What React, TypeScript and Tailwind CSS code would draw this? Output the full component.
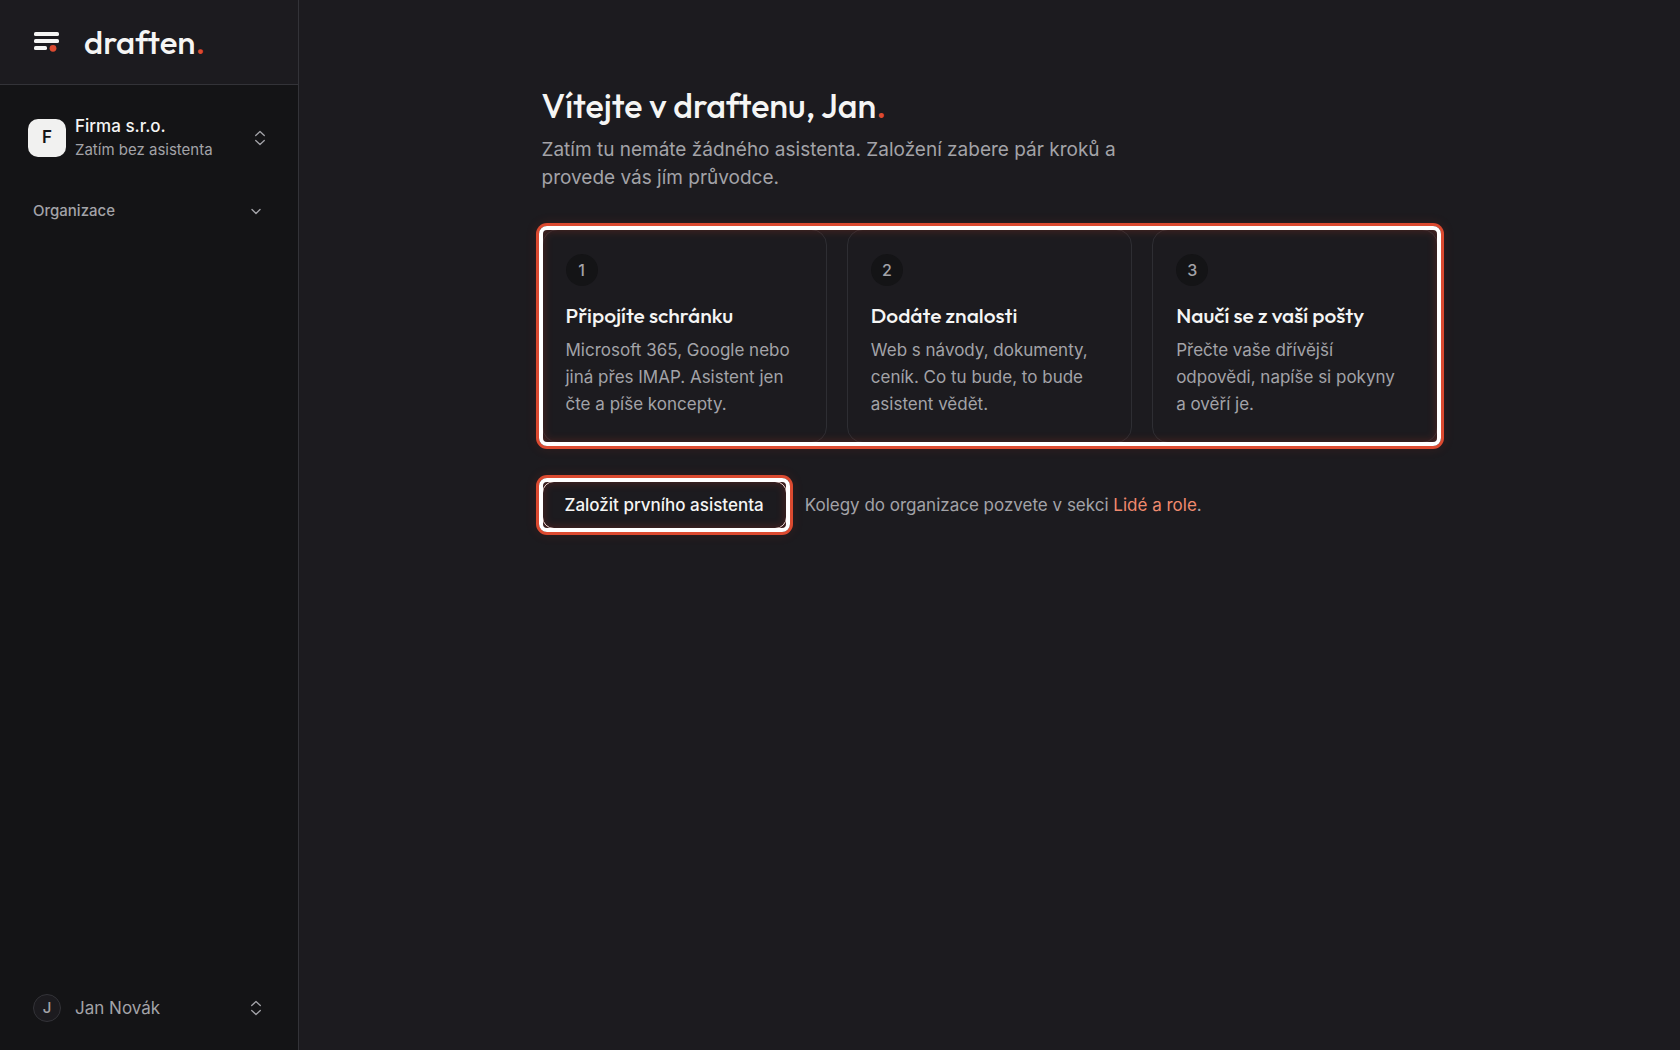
import React from "react";

const steps = [
  { title: "Připojíte schránku", text: "Microsoft 365, Google nebo jiná přes IMAP. Asistent jen čte a píše koncepty." },
  { title: "Dodáte znalosti", text: "Web s návody, dokumenty, ceník. Co tu bude, to bude asistent vědět." },
  { title: "Naučí se z vaší pošty", text: "Přečte vaše dřívější odpovědi, napíše si pokyny a\u00a0ověří je." },
];

function UpDown() {
  return (
    <svg className="h-4 w-4 shrink-0 text-[#a3a3a8]" viewBox="0 0 16 16" fill="none" stroke="currentColor" strokeWidth="1.3" strokeLinecap="round" strokeLinejoin="round" aria-hidden="true">
      <path d="M3.7 5.5 8 1.5l4.3 4M3.7 10.5l4.3 4 4.3-4" />
    </svg>
  );
}

function Highlight() {
  return (
    <span
      aria-hidden="true"
      className="pointer-events-none absolute -inset-[3px] rounded-lg border-4 border-white shadow-[0_0_0_3px_#dc4a30,inset_0_0_10px_rgba(220,60,35,0.3),0_0_12px_3px_rgba(220,60,35,0.12)]"
    />
  );
}

export default function App() {
  return (
    <div className="flex min-h-screen bg-[#1c1b1f] font-['Inter',sans-serif] text-[#a3a3a8]">
      <aside className="flex w-[299px] shrink-0 flex-col border-r border-[#333338] bg-[#141416]">
        <header className="flex h-[85px] items-center gap-6 border-b border-[#333338] bg-[#1c1b1f] px-8">
          <svg className="h-7 w-7 shrink-0" viewBox="0 0 28 28" aria-hidden="true">
            <g fill="#f5f5f4">
              <rect x="2" y="4" width="25" height="4" rx="1.6" />
              <rect x="2" y="11" width="25" height="4" rx="1.6" />
              <rect x="2" y="18" width="13" height="4" rx="1.6" />
            </g>
            <circle cx="21" cy="20.3" r="3.4" fill="#dc4a30" />
          </svg>
          <span className="font-['Outfit','Lato',sans-serif] text-[33px] leading-10 font-medium text-[#f5f5f4]">
            draften<span className="text-[#dc4a30]">.</span>
          </span>
        </header>
        <button type="button" className="mx-3 mt-[17px] flex items-center gap-[9px] py-3 pr-[18px] pl-4 text-left">
          <span className="flex h-[38px] w-[38px] shrink-0 items-center justify-center rounded-[10px] bg-[#f1f1f0] text-[17px] font-semibold text-[#141416]">F</span>
          <span className="flex-1">
            <span className="block text-[17px] leading-6 font-medium text-[#f5f5f4]">Firma s.r.o.</span>
            <span className="block text-[15px] leading-6">Zatím bez asistenta</span>
          </span>
          <UpDown />
        </button>
        <button type="button" className="mx-3 mt-[17px] flex items-center justify-between py-2 pr-[22px] pl-[21px] text-left text-[15px] leading-6 font-medium">
          Organizace
          <svg className="h-4 w-4" viewBox="0 0 16 16" fill="none" stroke="currentColor" strokeWidth="1.4" strokeLinecap="round" strokeLinejoin="round" aria-hidden="true">
            <path d="m4 6.5 4 4 4-4" />
          </svg>
        </button>
        <button type="button" className="mx-3 mt-auto mb-6 flex items-center gap-3 py-1 pr-[22px] pl-[21px] text-left">
          <span className="flex h-7 w-7 shrink-0 items-center justify-center rounded-full border border-[#333338] bg-[#1c1b1f] text-[15px] font-medium">J</span>
          <span className="flex-1 pl-0.5 text-[17px] leading-6">Jan Novák</span>
          <UpDown />
        </button>
      </aside>

      <main className="min-w-0 flex-1 px-8 pt-[84px]">
        <div className="mx-auto max-w-4xl">
          <h1 className="font-['Outfit','Lato',sans-serif] text-[34px] leading-[44px] font-medium text-[#f5f5f4]">
            Vítejte v draftenu, Jan<span className="text-[#dc4a30]">.</span>
          </h1>
          <p className="mt-2 max-w-[600px] text-[19px] leading-7">
            Zatím tu nemáte žádného asistenta. Založení zabere pár kroků a provede vás jím průvodce.
          </p>
          <div className="relative mt-[37px]">
            <ol className="grid grid-cols-3 gap-5">
              {steps.map((s, i) => (
                <li key={s.title} className="rounded-2xl border border-[#2e2e33] px-[23px] py-6">
                  <span className="flex h-8 w-8 items-center justify-center rounded-full bg-[#141416] text-base font-medium">{i + 1}</span>
                  <h2 className="mt-[15px] font-['Outfit','Lato',sans-serif] text-[21px] leading-7 font-medium text-[#f5f5f4]">{s.title}</h2>
                  <p className="mt-2 text-[17px] leading-[27px]">{s.text}</p>
                </li>
              ))}
            </ol>
            <Highlight />
          </div>
          <div className="mt-[38px] flex flex-wrap items-center gap-[18px]">
            <div className="relative">
              <button type="button" className="block h-12 rounded-xl border border-[#f5f5f4] px-[22px] text-[17px] leading-6 font-medium text-[#f5f5f4]">
                Založit prvního asistenta
              </button>
              <Highlight />
            </div>
            <p className="text-[17px] leading-6">
              Kolegy do organizace pozvete v sekci <a href="#lide" className="text-[#f08a6e]">Lidé a role</a>.
            </p>
          </div>
        </div>
      </main>
    </div>
  );
}
